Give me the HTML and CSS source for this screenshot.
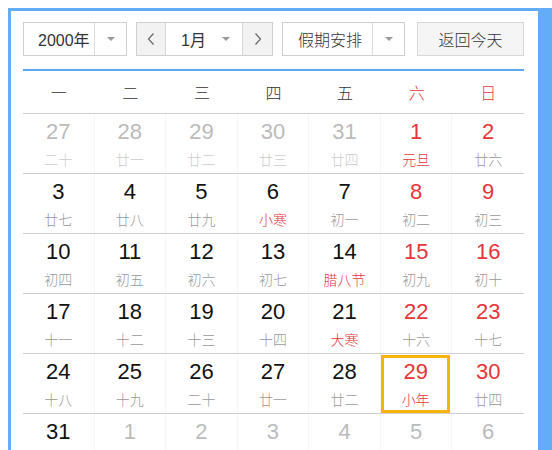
FILE: index.html
```html
<!DOCTYPE html>
<html lang="zh-CN">
<head>
<meta charset="utf-8">
<title>万年历</title>
<link rel="stylesheet" href="styles.css">
</head>
<body>
<div class="frame">
  <div class="panel">
    <div class="toolbar">
      <div class="select year">
        <span class="sel-text">2000年</span>
        <span class="sel-arrow"><i class="tri"></i></span>
      </div>
      <div class="month-group">
        <span class="nav"><svg width="10" height="14" viewBox="0 0 10 14"><polyline points="7.5,1.5 2.5,7 7.5,12.5" fill="none" stroke="#666" stroke-width="1.2"/></svg></span>
        <span class="month-sel"><span class="sel-text">1月</span><i class="tri"></i></span>
        <span class="nav"><svg width="10" height="14" viewBox="0 0 10 14"><polyline points="2.5,1.5 7.5,7 2.5,12.5" fill="none" stroke="#666" stroke-width="1.2"/></svg></span>
      </div>
      <div class="select holiday">
        <span class="sel-text">假期安排</span>
        <span class="sel-arrow"><i class="tri"></i></span>
      </div>
      <div class="today-btn">返回今天</div>
    </div>
    <div class="calendar">
      <div class="week">
        <span>一</span><span>二</span><span>三</span><span>四</span><span>五</span><span class="red">六</span><span class="red">日</span>
      </div>
      <div class="row">
        <div class="cell other"><b>27</b><em>二十</em></div>
        <div class="cell other"><b>28</b><em>廿一</em></div>
        <div class="cell other"><b>29</b><em>廿二</em></div>
        <div class="cell other"><b>30</b><em>廿三</em></div>
        <div class="cell other"><b>31</b><em>廿四</em></div>
        <div class="cell weekend"><b>1</b><em class="fest">元旦</em></div>
        <div class="cell weekend"><b>2</b><em>廿六</em></div>
      </div>
      <div class="row">
        <div class="cell"><b>3</b><em>廿七</em></div>
        <div class="cell"><b>4</b><em>廿八</em></div>
        <div class="cell"><b>5</b><em>廿九</em></div>
        <div class="cell"><b>6</b><em class="fest">小寒</em></div>
        <div class="cell"><b>7</b><em>初一</em></div>
        <div class="cell weekend"><b>8</b><em>初二</em></div>
        <div class="cell weekend"><b>9</b><em>初三</em></div>
      </div>
      <div class="row">
        <div class="cell"><b>10</b><em>初四</em></div>
        <div class="cell"><b>11</b><em>初五</em></div>
        <div class="cell"><b>12</b><em>初六</em></div>
        <div class="cell"><b>13</b><em>初七</em></div>
        <div class="cell"><b>14</b><em class="fest">腊八节</em></div>
        <div class="cell weekend"><b>15</b><em>初九</em></div>
        <div class="cell weekend"><b>16</b><em>初十</em></div>
      </div>
      <div class="row">
        <div class="cell"><b>17</b><em>十一</em></div>
        <div class="cell"><b>18</b><em>十二</em></div>
        <div class="cell"><b>19</b><em>十三</em></div>
        <div class="cell"><b>20</b><em>十四</em></div>
        <div class="cell"><b>21</b><em class="fest">大寒</em></div>
        <div class="cell weekend"><b>22</b><em>十六</em></div>
        <div class="cell weekend"><b>23</b><em>十七</em></div>
      </div>
      <div class="row">
        <div class="cell"><b>24</b><em>十八</em></div>
        <div class="cell"><b>25</b><em>十九</em></div>
        <div class="cell"><b>26</b><em>二十</em></div>
        <div class="cell"><b>27</b><em>廿一</em></div>
        <div class="cell"><b>28</b><em>廿二</em></div>
        <div class="cell weekend today"><b>29</b><em class="fest">小年</em></div>
        <div class="cell weekend"><b>30</b><em>廿四</em></div>
      </div>
      <div class="row last">
        <div class="cell"><b>31</b></div>
        <div class="cell other"><b>1</b></div>
        <div class="cell other"><b>2</b></div>
        <div class="cell other"><b>3</b></div>
        <div class="cell other"><b>4</b></div>
        <div class="cell other"><b>5</b></div>
        <div class="cell other"><b>6</b></div>
      </div>
    </div>
  </div>
</div>
</body>
</html>
```
FILE: styles.css
```css
html, body {
  margin: 0;
  padding: 0;
  background: #fff;
  overflow: hidden;
  height: 450px;
}
body {
  font-family: "Liberation Sans", "Noto Sans CJK SC", sans-serif;
  color: #333;
}
.frame {
  margin: 8px 0 0 8px;
  background: #62acf8;
  padding: 3px 14px 0 3px;
  height: 439px;
}
.panel {
  width: 527px;
  background: #fff;
  padding: 11px 14px 0 12px;
  box-sizing: border-box;
  height: 100%;
  overflow: hidden;
}
.toolbar {
  display: flex;
  height: 34px;
  padding-bottom: 13px;
  border-bottom: 2px solid #5aa8f5;
}
.select, .month-group, .today-btn {
  box-sizing: border-box;
  height: 34px;
  border: 1px solid #cfcfcf;
  display: flex;
  align-items: stretch;
  font-size: 16px;
  color: #333;
}
.year { width: 104px; }
.holiday { width: 123px; margin-left: 9px; font-weight: 300; }
.sel-text {
  flex: 1;
  display: flex;
  align-items: center;
  padding-left: 14px;
}
.holiday .sel-text { padding-left: 15px; }
.sel-arrow {
  width: 31px;
  border-left: 1px solid #dcdcdc;
  display: flex;
  align-items: center;
  justify-content: center;
}
.tri {
  display: block;
  width: 0;
  height: 0;
  border-left: 4px solid transparent;
  border-right: 4px solid transparent;
  border-top: 4px solid #999;
}
.month-group {
  width: 137px;
  margin-left: 9px;
}
.nav {
  width: 28px;
  background: #f2f2f2;
  display: flex;
  align-items: center;
  justify-content: center;
}
.nav:first-child { border-right: 1px solid #d8d8d8; }
.nav:last-child { border-left: 1px solid #d8d8d8; width: 29px; }
.month-sel {
  flex: 1;
  display: flex;
  align-items: center;
  padding-right: 12px;
}
.month-sel .sel-text { padding-left: 15px; }
.today-btn {
  width: 107px;
  margin-left: 12px;
  background: #f5f5f5;
  border-color: #d8d8d8;
  justify-content: center;
  align-items: center;
  font-weight: 300;
}
.calendar {
  width: 501px;
}
.week {
  display: grid;
  grid-template-columns: repeat(7, 1fr);
  height: 42px;
  align-items: center;
  border-bottom: 1px solid #cfcfcf;
  font-size: 16px;
  color: #333;
  font-family: "Noto Sans CJK SC", sans-serif;
  font-weight: 300;
}
.week span { text-align: center; }
.red { color: #e8353a; }
.row {
  display: grid;
  grid-template-columns: repeat(7, 1fr);
  height: 60px;
  box-sizing: border-box;
  border-bottom: 1px solid #cfcfcf;
}
.cell {
  display: flex;
  flex-direction: column;
  align-items: center;
  padding-top: 5px;
  border-right: 1px solid #f6f6f6;
  box-sizing: border-box;
}
.cell:last-child { border-right: none; }
.cell b {
  font-weight: normal;
  font-size: 22px;
  line-height: 26px;
  color: #111;
}
.cell em {
  font-style: normal;
  font-size: 14px;
  line-height: 18px;
  margin-top: 5px;
  color: #999;
  font-family: "Noto Sans CJK SC", sans-serif;
  font-weight: 300;
}
.cell.weekend b { color: #e8353a; }
.cell.weekend em { color: #999; }
.cell em.fest, .cell.weekend em.fest { color: #e8353a; }
.cell.other b { color: #bbb; }
.cell.other em { color: #ccc; }
.cell.today {
  border: 3px solid #f8b406;
  margin: 1px 2px 0 0;
  padding-top: 1px;
}
```
